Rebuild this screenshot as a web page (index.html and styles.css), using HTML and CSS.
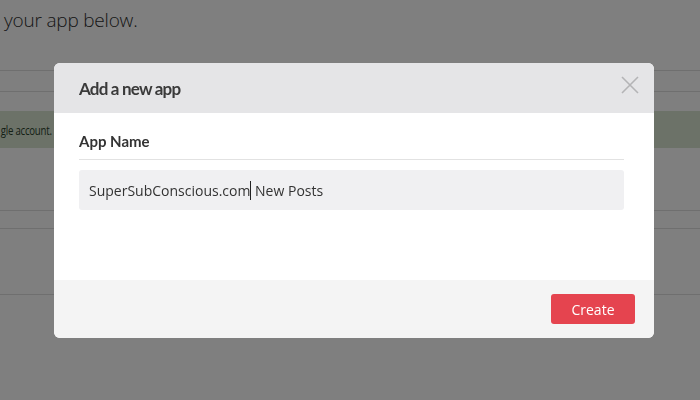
FILE: index.html
```html
<!DOCTYPE html>
<html>
<head>
<meta charset="utf-8">
<link rel="stylesheet" href="styles.css">
</head>
<body>
<div class="page">
  <h1 class="lead">your app below.</h1>
  <div class="rule r1"></div>
  <div class="rule r2"></div>
  <div class="alert"><span class="alert-text">gle account.</span></div>
  <div class="rule r3"></div>
  <div class="rule r4"></div>
  <div class="rule r5"></div>
</div>
<div class="overlay"></div>
<div class="modal">
  <div class="modal-header">
    <h2 class="modal-title">Add a new app</h2>
    <svg class="close" width="18" height="18" viewBox="0 0 18 18"><path d="M1 1 L17 17 M17 1 L1 17" stroke="#b4b4b6" stroke-width="1.6" fill="none"/></svg>
  </div>
  <div class="modal-body">
    <div class="label">App Name</div>
    <div class="field"><span>SuperSubConscious.com</span><span class="caret"></span><span>&nbsp;New Posts</span></div>
  </div>
  <div class="modal-footer">
    <button class="btn">Create</button>
  </div>
</div>
</body>
</html>
```
FILE: styles.css
```css
html, body { margin: 0; padding: 0; }
body { width: 700px; height: 400px; overflow: hidden; background: #fff; font-family: "Open Sans", sans-serif; }
.page { width: 700px; height: 400px; background: #fff; }
.lead { margin: 0; padding: 7px 0 0 4px; height: 31px; font-size: 19px; font-weight: 300; color: #2e2e2e; line-height: 26px; letter-spacing: -0.2px; }
.rule { height: 1px; background: #dedede; }
.r1 { margin-top: 32px; }
.r2 { margin-top: 20px; }
.alert { margin-top: 19px; height: 37px; background: #d8e4d0; display: flex; align-items: center; white-space: nowrap; }
.alert-text { display: inline-block; color: #2b402b; font-size: 13px; letter-spacing: -0.3px; padding-left: 1px; transform: scaleX(0.74); transform-origin: left center; }
.r3 { margin-top: 62px; }
.r4 { margin-top: 17px; }
.r5 { margin-top: 65px; }
.overlay { position: fixed; inset: 0; background: rgba(0,0,0,0.5); }
.modal { position: fixed; left: 54px; top: 63px; width: 600px; border-radius: 6px; overflow: hidden; background: #fff; }
.modal-header { height: 50px; background: #e5e5e7; display: flex; align-items: center; justify-content: space-between; padding: 0 15px 0 25px; }
.modal-title { margin: 0; font-family: Lato, sans-serif; font-weight: 700; font-size: 17px; letter-spacing: -0.8px; color: #3a3a3a; }
.close { display: block; margin-top: -6px; }
.modal-body { height: 167px; padding: 0 30px 0 25px; }
.label { padding-top: 17px; height: 29px; font-family: Lato, sans-serif; font-weight: 700; font-size: 15px; color: #333; border-bottom: 1px solid #e2e2e2; line-height: 22px; }
.field { margin-top: 10px; height: 40px; background: #f0f0f2; border-radius: 3px; display: flex; align-items: center; padding-left: 10px; font-size: 14px; color: #333; font-family: "Open Sans", sans-serif; }
.caret { display: inline-block; width: 1px; height: 19px; background: #222; }
.modal-footer { height: 58px; background: #f4f4f4; display: flex; align-items: center; justify-content: flex-end; padding-right: 19px; }
.btn { width: 84px; height: 30px; border: 0; border-radius: 3px; background: #e5444f; color: #fff; font-family: "Open Sans", sans-serif; font-size: 14px; padding: 0; }
```
